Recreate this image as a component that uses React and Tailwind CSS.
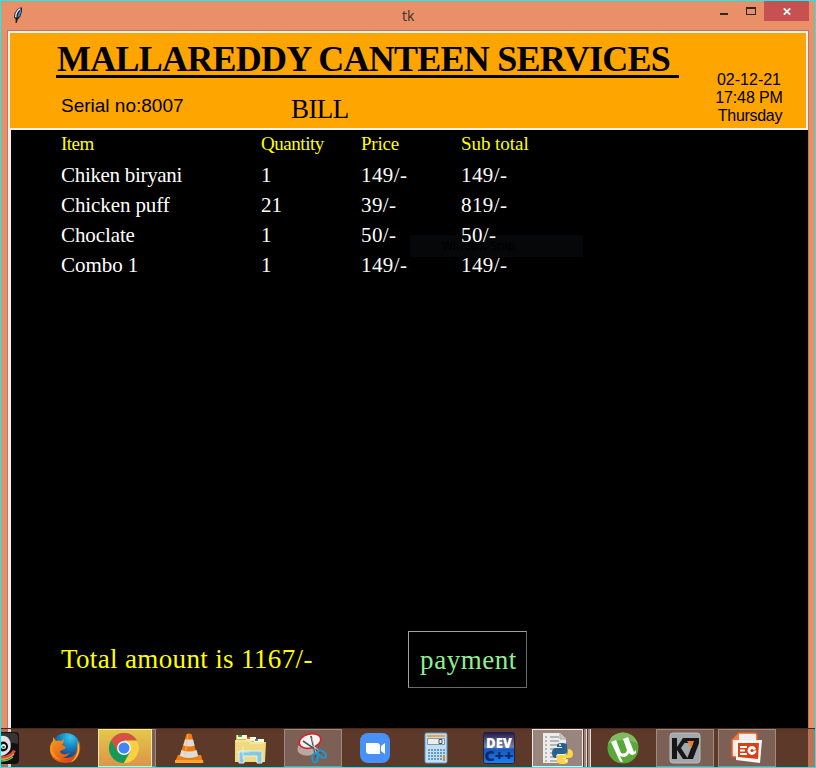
import React from 'react';

const SERIF = "font-['Liberation_Serif','Times_New_Roman',serif]";
const SANS = "font-['Liberation_Sans',Arial,sans-serif]";
const UI = "font-['Open_Sans','Noto_Sans',sans-serif]";

const items = [
  ['Chiken biryani', '1', '149/-', '149/-'],
  ['Chicken puff', '21', '39/-', '819/-'],
  ['Choclate', '1', '50/-', '50/-'],
  ['Combo 1', '1', '149/-', '149/-'],
];

const nameTracking = ['tracking-[-0.31px]', 'tracking-[-0.1px]', 'tracking-[-0.1px]', 'tracking-[-0.05px]'];

function Feather() {
  return (
    <svg className="block h-4 w-[10px]" viewBox="0 0 10 16">
      <path d="M2.6 16V12L1 10.5 1.6 6.5 3.6 3 6.5 .8 9 .6 8.8 5 7.4 9.5 4.8 12.5 3.6 16z" fill="#17191c" />
      <path d="M2.7 10.3l.4-3.5L4.8 3.6 7.4 1.6" stroke="#d8efff" strokeWidth="1.4" fill="none" />
      <path d="M4.3 10.8l1.2-4L8 1.8v3.4L6.6 9z" fill="#4a8fdc" />
    </svg>
  );
}

function TitleBar() {
  return (
    <header className="flex h-[29px] items-start">
      <div className="ml-3 mt-[6px] w-[10px]"><Feather /></div>
      <div className={`${UI} ml-[379px] mt-[5px] w-[311px] text-[14px] leading-5 text-[#3b2f2c]`}>tk</div>
      <div className="ml-[7px] mt-3 h-[2px] w-2 bg-[#292929]" />
      <div className="ml-[18px] mt-[6px] h-2 w-[10px] border border-t-2 border-[#292929]" />
      <button className="ml-2 flex h-5 w-[45px] items-center justify-center bg-[#c75050]">
        <svg className="block h-[7px] w-2" viewBox="0 0 8 7">
          <path d="M.8.3l6.4 6.4M7.2.3L.8 6.7" stroke="#fff" strokeWidth="1.7" />
        </svg>
      </button>
    </header>
  );
}

function Banner() {
  return (
    <section className="flex h-[95px] w-[796px] bg-[#ffa500]">
      <div className="w-[690px] pl-[46px]">
        <h1 className={`${SERIF} h-[45px] w-[623px] whitespace-pre border-b-[3px] border-black pl-px pt-[5px] text-[36px] font-bold leading-[42px] tracking-[-0.76px] text-black`}>MALLAREDDY CANTEEN SERVICES</h1>
        <div className="flex pl-[5px]">
          <div className={`${SANS} w-[230px] pt-[16px] text-[19px] leading-6 text-black`}>Serial no:8007</div>
          <div className={`${SERIF} pt-[15px] text-[27px] leading-8 tracking-[-0.6px] text-black`}>BILL</div>
        </div>
      </div>
      <div className={`${SANS} w-[98px] pt-[38px] text-center text-[16px] leading-[18px] text-black`}>
        <div>02-12-21</div>
        <div className="tracking-[-0.1px]">17:48 PM</div>
        <div className="pl-[2px] tracking-[-0.3px]">Thursday</div>
      </div>
    </section>
  );
}

function Bill() {
  return (
    <main className={`${SERIF} relative ml-px h-[598px] w-[797px] bg-black pl-[50px]`}>
      <div className={`${UI} absolute left-[399px] top-[105px] h-[22px] w-[173px] bg-[#050709] pl-8 text-[12px] leading-[21px] text-black`}>Window Snip</div>
      <div className="relative grid grid-cols-[200px_100px_100px_150px] pt-[3px] text-[19px] leading-[22px] text-[#ffff00]">
        <span className="tracking-[-0.5px]">Item</span><span className="tracking-[-0.45px]">Quantity</span><span className="tracking-[-0.2px]">Price</span><span className="tracking-[-0.05px]">Sub total</span>
      </div>
      <div className="relative pt-[5px] text-[21px] leading-[30px] text-white">
        {items.map(([name, quantity, price, total], i) => (
          <div key={name} className="grid grid-cols-[200px_100px_100px_150px]">
            <span className={nameTracking[i]}>{name}</span>
            <span>{quantity}</span>
            <span className="tracking-[0.4px]">{price}</span>
            <span className="tracking-[0.4px]">{total}</span>
          </div>
        ))}
      </div>
      <div className="mt-[351px] flex text-[27px]">
        <div className="w-[347px] pt-[12px] leading-8 tracking-[0.36px] text-[#ffff00]">Total amount is 1167/-</div>
        <button className="h-[57px] w-[119px] border border-[#696969] border-l-[#a0a0a0] border-t-[#a0a0a0] pl-[2px] leading-8 tracking-[0.55px] text-[#90ee90]">payment</button>
      </div>
    </main>
  );
}

function Icon({ children, w = 32, className = '' }) {
  return <svg className={`block h-8 shrink-0 ${className}`} width={w} viewBox={`0 0 ${w} 32`}>{children}</svg>;
}

function Taskbar() {
  const open = 'box-border flex h-[38px] w-[58px] shrink-0 items-center justify-center border border-[#a18a80] bg-[#7c6055]';
  return (
    <footer className="mx-px flex h-[39px] w-[814px] items-start overflow-hidden border-t border-[#49291d] bg-[linear-gradient(90deg,#b56c55_0px,#b56c55_7px,#d9cdc8_7px,#d9cdc8_10px,#5d392a_10px,#5d392a_807px,#bd7158_807px)]">
      <Icon w={18} className="mt-[3px] w-[18px]">
        <path d="M0 0h14q4 0 4 4v24q0 4-4 4H0z" fill="#111" />
        <path d="M0 1h13q3 0 4 3v8Q8 9 0 13z" fill="#353535" />
        <path d="M0 4q5-1 8 3 3 5 1 11-3 5-9 6z" fill="#e2e2e2" />
        <circle cx="2" cy="14.500" r="5" fill="#0a0a0a" />
        <circle cx="2.500" cy="14.500" r="2.500" fill="#f4f4f4" /><circle cx="2.500" cy="15" r="1.300" fill="#257650" />
        <path d="M0 24q8 0 12-6l3 1q-4 8-15 9z" fill="#e4463a" /><path d="M0 27q7 1 13-5" stroke="#e3a24e" strokeWidth="1.5" fill="none" /><path d="M0 29q7 0 12-4" stroke="#6fc24e" strokeWidth="1.5" fill="none" />
      </Icon>
      <Icon className="ml-[30px] mt-[3px]">
        <defs><radialGradient id="globe" cx=".65" cy=".15" r=".8"><stop stopColor="#35c9ed" /><stop offset=".5" stopColor="#147bbd" /><stop offset="1" stopColor="#173a76" /></radialGradient>
          <linearGradient id="fox" x2="1" y2="1"><stop stopColor="#f7a11b" /><stop offset=".5" stopColor="#e96a16" /><stop offset="1" stopColor="#c93818" /></linearGradient></defs>
        <circle cx="17" cy="15" r="14" fill="url(#globe)" />
        <path d="M4 5l3 4q3-1 5 0l3-2q0 4-2 6l4 2-1 2-5 2q1 4 6 3 3 0 4-2-2 6-8 5 9 3 14-4 2-5 1-9 2 2 2 4V9q2 5 1 10-3 12-15 12Q3 30 1 19 .8 12 4 9z" fill="url(#fox)" />
        <path d="M28.500 9q2.500 5 1.500 11-2 8-9 11 6-5 7.500-12z" fill="#f8ba27" /><path d="M4 9l-1 7q2 9 9 12Q2 26 1 17q0-5 3-8z" fill="#f5961c" />
      </Icon>
      <div className="ml-[17px] flex h-[38px] w-[54px] shrink-0 items-center justify-center border border-[#f4e4ae] bg-linear-to-b from-[#e3c847] to-[#dd934a]">
        <Icon className="-ml-[3px]">
          <circle cx="16" cy="16" r="15" fill="#4caf50" /><path d="M3 8.5A15 15 0 0 1 29 8.5H16L9.5 19.7z" fill="#d94f43" />
          <path d="M29 8.5A15 15 0 0 1 15.7 31l6.8-11.4L16 8.5z" fill="#fecd40" /><path d="M3 8.5L9.5 19.7Q14 25 20.5 22L15.7 31A15 15 0 0 1 3 8.5z" fill="#149b58" />
          <circle cx="16" cy="16" r="7" fill="#f6f6f6" /><circle cx="16" cy="16" r="5.5" fill="#4285f4" />
        </Icon>
      </div>
      <div className="h-[38px] w-1 shrink-0 border border-l-0 border-[#a18a80] bg-[#7c6055]" />
      <Icon className="ml-[17px] mt-[3px]">
        <path d="M5 23h23l2 7q0 1-2 1H4q-2 0-2-1z" fill="#ef7f12" /><path d="M2 28h28l.4 3H2z" fill="#ffa52e" />
        <path d="M13.500 2q2.500-1 5 0l6 23q-9 5-18 0z" fill="#f27a0b" /><path d="M12 7.500h8l1.600 6q-5.600 2-11.200 0zM8.400 18q7.600 3 15.200 0l1.600 6q-9.200 4-18.400 0z" fill="#dddedb" />
        <path d="M15 2l-3 21" stroke="#ffc06c" opacity=".7" />
      </Icon>
      <Icon className="ml-[29px] mt-[3px]">
        <path d="M2 8V3h9l2 2h7l1 2h9v20l-2 3H1V8z" fill="#d9b250" /><path d="M3 3h10v4H3zM12 5h10v4H12zM20 7h10v4H20z" fill="#faf8dd" />
        <path d="M4 3h4v2H4z" fill="#14b729" /><path d="M13 5h3v2h-3z" fill="#e45232" /><path d="M21 7h3v2h-3z" fill="#258ed5" />
        <path d="M1 8h15l2 2h14l-1 20H1z" fill="#f0d97f" /><path d="M2 9h13l2 2h13" stroke="#fff3b0" fill="none" />
        <path d="M5 20q0-1 2-1h19q2 0 2 1v11h-5v-7H10v7H5z" fill="#86c9dd" stroke="#d6f5fa" /><path d="M9 15v12M3 20h12" stroke="white" opacity=".6" />
      </Icon>
      <div className={`${open} ml-[18px]`}>
        <Icon><ellipse cx="10" cy="17" rx="10" ry="7" fill="#b6aaa5" stroke="#b54642" strokeWidth=".6" />
          <ellipse cx="13" cy="9" rx="11" ry="7" transform="rotate(-15 13 9)" fill="#f5f4f3" stroke="#d52328" strokeWidth="1.6" />
          <path d="M6 9l18 12M14 4l5 21" stroke="#4c5556" strokeWidth="1.700" /><path d="M8 9l15 10M15 6l4 15" stroke="#dce3e4" strokeWidth=".7" />
          <ellipse cx="18" cy="26" rx="2.700" ry="4.500" fill="none" stroke="#2296cb" strokeWidth="2.200" /><ellipse cx="25" cy="22" rx="2.700" ry="4.800" transform="rotate(-50 25 22)" fill="none" stroke="#2296cb" strokeWidth="2.200" />
        </Icon>
      </div>
      <Icon className="ml-[17px] mt-[3px]"><rect x="1" y="1" width="30" height="30" rx="8" fill="#4892f7" /><path d="M7 11h11q3 0 3 3v8H10q-3 0-3-3zM22 14l4-3v11l-4-3z" fill="white" /></Icon>
      <Icon className="ml-[29px] mt-[3px]">
        <rect x="5" y="1" width="22" height="30" rx="1.5" fill="#c2e0f5" stroke="#5d9acb" /><path d="M7 3h18v2H7z" fill="#f1a13c" /><path d="M7.5 6.5h17v6h-17z" fill="#e9f0e9" stroke="#8199a6" />
        <path d="M19 7.5h3v4h-3z" fill="none" stroke="#42536d" />
        {[17, 20, 23, 26].map((y) => [8, 11, 14, 17, 20, 23].map((x) => <rect key={`${x}-${y}`} x={x} y={y} width="2" height={x === 23 && y > 22 ? 3 : 2} fill={x === 23 && y > 22 ? '#e9851b' : '#6a98c4'} />))}
      </Icon>
      <Icon className="ml-[31px] mt-[3px]">
        <defs><linearGradient id="dev" x2="0" y2="1"><stop stopColor="#21184d" /><stop offset=".45" stopColor="#7682a7" /><stop offset=".55" stopColor="#1558be" /><stop offset="1" stopColor="#1684f0" /></linearGradient></defs>
        <rect x=".5" y=".5" width="31" height="31" rx="2" fill="url(#dev)" stroke="#242044" />
        <text x="16" y="15.5" textAnchor="middle" textLength="26" lengthAdjust="spacingAndGlyphs" fontFamily="Open Sans, sans-serif" fontWeight="800" fontSize="14" fill="white">DEV</text>
        <text x="1.5" y="28.5" textLength="29" lengthAdjust="spacingAndGlyphs" fontFamily="Open Sans, sans-serif" fontWeight="800" fontSize="14" fill="#102667">C++</text>
      </Icon>
      <div className="ml-[17px] flex h-[38px] w-[51px] shrink-0 items-center justify-center border border-[#f0e9e5] bg-[#98857d]">
        <Icon><path d="M1 1h17l6 6v24H1z" fill="#ececeb" /><path d="M18 1v6h6" fill="#c9c9c9" stroke="#aaa" />
          {[5, 9, 13, 17, 21, 25, 29].map((y) => <path key={y} d={`M3 ${y}h2m3 0h9`} stroke="#a3a3a3" strokeWidth="1.6" />)}
          <path d="M15 13q0-2 5-2t5 2v6q0 3-3 3h-6q-2 0-2 4-4 0-4-5t4-5h6v-1h-5z" fill="#28628f" /><path d="M26 17q5 0 5 5 0 4-4 4h-6v1h5v3q-1 2-5.5 2t-5.5-2v-4q0-3 3-3h5q3 0 3-3z" fill="#ffd447" />
          <circle cx="18" cy="13" r="1" fill="white" /><circle cx="24" cy="29" r="1" fill="white" />
        </Icon>
      </div>
      <div className="ml-px h-[38px] w-[3px] shrink-0 border-r border-[#e3d8d3] bg-[#98857d]" /><div className="ml-px h-[38px] w-[3px] shrink-0 border-r border-[#e3d8d3] bg-[#98857d]" />
      <Icon className="ml-4 mt-[3px]">
        <circle cx="16" cy="16" r="15.5" fill="#5ba83a" /><path d="M1 12Q4 1 16 .5 27 1 31 12 18 4 1 12" fill="#7fba61" />
        <path d="M4 10l5-2 5 13q5 2 6-3L16 7l5-2 6 15 2-2v3q-4 4-7 0-3 6-9 3l3 6-3-.5z" fill="white" />
      </Icon>
      <div className={`${open} ml-[17px]`}>
        <Icon><rect x="1" y="1" width="30" height="30" rx="3" fill="#a4a8aa" stroke="#b9bcbd" /><path d="M3 6h5v21H3zM8 15l6-9h5l-7 10 7 11h-5L8 18zM16 6h14v5l-6 16h-6l6-16h-8z" fill="#171717" /><path d="M18 9h7l-2.500 7z" fill="#f37a21" /></Icon>
      </div>
      <div className={`${open} ml-1`}>
        <Icon><path d="M8 1h16q2 0 2 2v22H3q-2 0-2-2V8z" fill="#f1eeee" stroke="#ef5b24" strokeWidth="1.6" /><path d="M8 1v7H1z" fill="#f47a3b" />
          <path d="M5 9l26-1-2 23-24-3z" fill="#fbf7f4" /><path d="M7 11h21l-1 16-20-2z" fill="#d94114" /><path d="M9 15h7M9 18.500h5M9 22h7" stroke="white" strokeWidth="2" />
          <circle cx="21" cy="18.500" r="4.400" fill="white" /><circle cx="21" cy="18.500" r="1.600" fill="#d94114" /><path d="M21 18.500h6v-2z" fill="#d94114" />
        </Icon>
      </div>
    </footer>
  );
}

export default function App() {
  return (
    <div className="h-[768px] w-[816px] overflow-hidden border-b border-t border-[#00f6ff] bg-[#e99068]">
      <div className="h-[727px] border-x border-[#00f6ff]">
        <TitleBar />
        <div className="ml-[6px] h-[698px] w-[802px] border-x border-t border-[#c17755] bg-[#f0f0f0]">
          <div className="flex flex-col gap-[2px] pl-[2px] pt-[2px]">
            <Banner />
            <Bill />
          </div>
        </div>
      </div>
      <div className="h-[39px] border-x border-[#00f6ff]"><div className="-mx-px"><Taskbar /></div></div>
    </div>
  );
}
